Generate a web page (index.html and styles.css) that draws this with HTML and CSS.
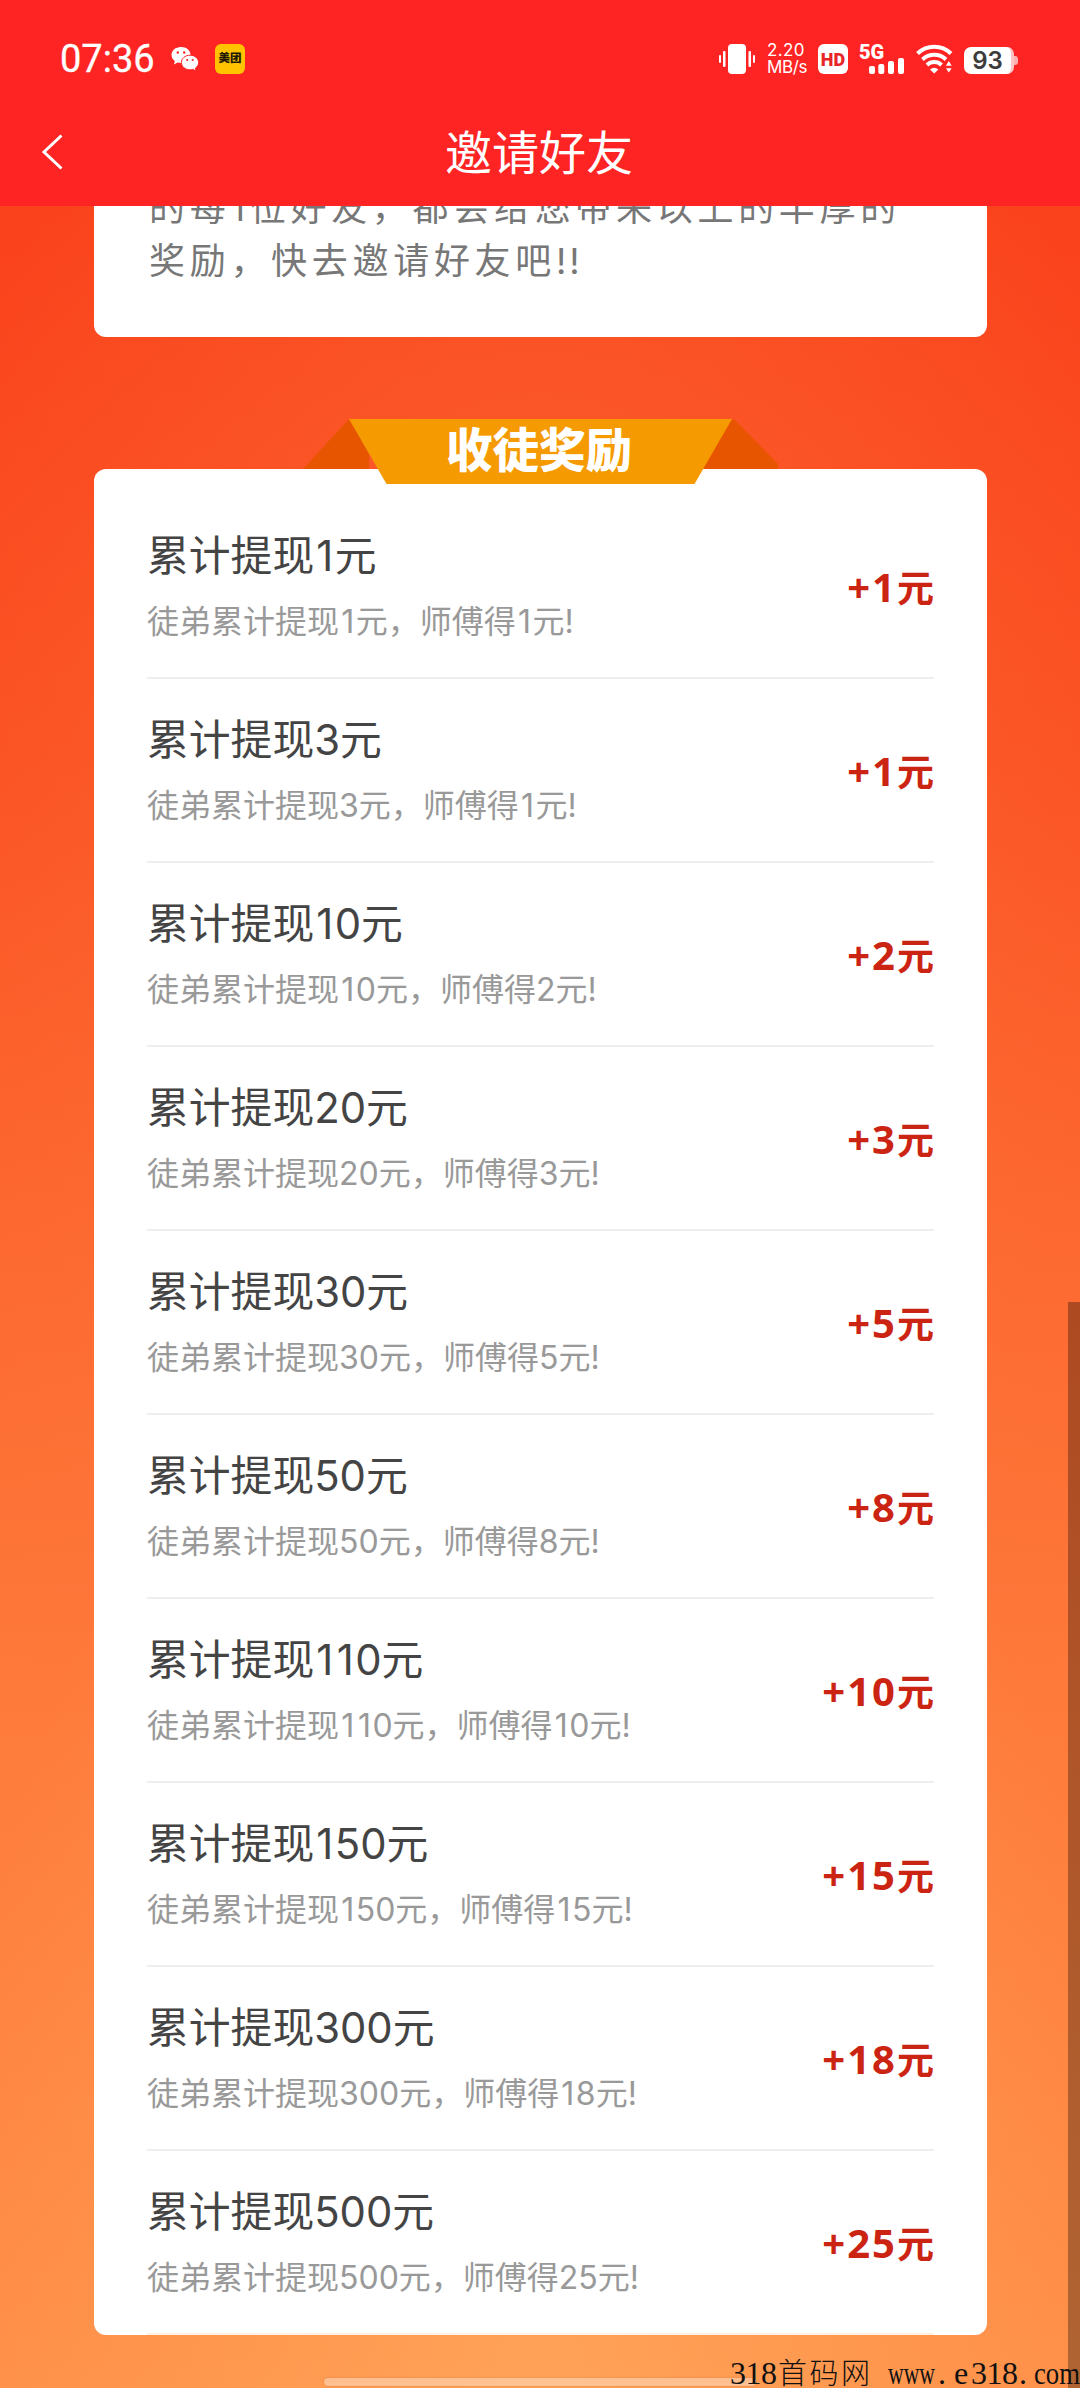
FILE: index.html
```html
<!DOCTYPE html>
<html lang="zh-CN">
<head>
<meta charset="utf-8">
<title>邀请好友</title>
<link rel="stylesheet" href="styles.css">
</head>
<body>
<div class="screen">
  <header class="header">
    <div class="status">
      <div class="status-left">
        <span class="time">07:36</span>
        <svg class="wechat" width="28" height="26" viewBox="0 0 28 26">
          <path fill="#fff" d="M10 1C4.500 1 .5 4.600.5 9c0 2.500 1.400 4.600 3.300 6.100L3 18.500l3.600-1.900c1 .3 2.200.5 3.400.5C15.500 17.100 19.500 13.500 19.500 9S15.500 1 10 1z"/>
          <path fill="#fff" stroke="#ff2424" stroke-width="1" d="M19 9.200c-4.800 0-8.600 3.300-8.600 7.300s3.800 7.300 8.600 7.300c1 0 2-.1 2.900-.4l3.200 1.700-.8-2.900c2-1.300 3.300-3.400 3.300-5.700 0-4-3.800-7.300-8.600-7.300z"/>
          <g fill="#ff2424"><circle cx="6.800" cy="6.500" r="1.200"/><circle cx="13.200" cy="6.500" r="1.200"/><circle cx="16.200" cy="14" r="1.100"/><circle cx="21.700" cy="14" r="1.100"/></g>
        </svg>
        <span class="meituan">美团</span>
      </div>
      <div class="status-right">
        <svg class="vibrate" width="36" height="30" viewBox="0 0 36 30" fill="#fff">
          <rect x="9" y="0" width="18" height="30" rx="4"/>
          <rect x="0" y="11" width="2" height="8" rx="1"/><rect x="4" y="7" width="2.500" height="16" rx="1"/>
          <rect x="29.500" y="7" width="2.500" height="16" rx="1"/><rect x="34" y="11" width="2" height="8" rx="1"/>
        </svg>
        <div class="speed"><span>2.20</span><span>MB/s</span></div>
        <span class="hd">HD</span>
        <div class="signal">
          <span class="net">5G</span>
          <svg class="bars" width="36" height="16" viewBox="0 0 36 16" fill="#fff">
            <rect x="0" y="8" width="6" height="8" rx="2"/><rect x="9.300" y="6" width="6" height="10" rx="2"/>
            <rect x="19" y="3" width="6" height="13" rx="2"/><rect x="29" y="0" width="6" height="16" rx="2"/>
          </svg>
        </div>
        <svg class="wifi" width="38" height="30" viewBox="0 0 38 30">
          <g fill="none" stroke="#fff" stroke-width="4"><path d="M1.500 9.500a24 24 0 0 1 33.500 0"/><path d="M6.500 15.500a17 17 0 0 1 23.500 0"/><path d="M11 21a10.500 10.500 0 0 1 14.500 0"/></g>
          <path fill="#fff" d="M14 25.500q4.200-3.500 8.400 0L18.200 29.500z"/>
          <path fill="#fff" stroke="#ff2424" stroke-width="1.500" d="M28.500 22.500l4.300-7 4.300 7zM28.500 23.500h8.600l-4.300 6.500z"/>
        </svg>
        <div class="battery"><span class="cell">93</span><span class="nub"></span></div>
      </div>
    </div>
    <nav class="navbar">
      <svg class="back" width="24" height="38" viewBox="0 0 24 38"><path d="M21.500 2.500L4 19l17.500 16.500" fill="none" stroke="#fff" stroke-width="3"/></svg>
      <h1 class="title">邀请好友</h1>
    </nav>
  </header>

  <main class="content">
    <section class="card intro">
      <p class="intro-text">的每<s>1</s>位好友，都会给您带来以上的丰厚的<br>奖励，快去邀请好友吧<span class="marks">!!</span></p>
    </section>

    <section class="card rewards">
      <div class="ribbon">
        <svg class="ribbon-shape" width="476" height="65" viewBox="0 0 476 65">
          <path fill="#e85500" d="M0 50L46 0h20v50zM431 0l44 45v5h-75V10z"/>
          <path fill="#f59a00" d="M46 0h383l-37.500 65h-308z"/>
        </svg>
        <h2 class="ribbon-title">收徒奖励</h2>
      </div>
      <ul class="list">
        <li class="row"><div><h3>累计提现<s>1</s>元</h3><p>徒弟累计提现<s>1</s>元，师傅得<s>1</s>元!</p></div><b>+1<i>元</i></b></li>
        <li class="row"><div><h3>累计提现3元</h3><p>徒弟累计提现3元，师傅得<s>1</s>元!</p></div><b>+1<i>元</i></b></li>
        <li class="row"><div><h3>累计提现<s>1</s>0元</h3><p>徒弟累计提现<s>1</s>0元，师傅得2元!</p></div><b>+2<i>元</i></b></li>
        <li class="row"><div><h3>累计提现20元</h3><p>徒弟累计提现20元，师傅得3元!</p></div><b>+3<i>元</i></b></li>
        <li class="row"><div><h3>累计提现30元</h3><p>徒弟累计提现30元，师傅得5元!</p></div><b>+5<i>元</i></b></li>
        <li class="row"><div><h3>累计提现50元</h3><p>徒弟累计提现50元，师傅得8元!</p></div><b>+8<i>元</i></b></li>
        <li class="row"><div><h3>累计提现<s>1</s><s>1</s>0元</h3><p>徒弟累计提现<s>1</s><s>1</s>0元，师傅得<s>1</s>0元!</p></div><b>+10<i>元</i></b></li>
        <li class="row"><div><h3>累计提现<s>1</s>50元</h3><p>徒弟累计提现<s>1</s>50元，师傅得<s>1</s>5元!</p></div><b>+15<i>元</i></b></li>
        <li class="row"><div><h3>累计提现300元</h3><p>徒弟累计提现300元，师傅得<s>1</s>8元!</p></div><b>+18<i>元</i></b></li>
        <li class="row"><div><h3>累计提现500元</h3><p>徒弟累计提现500元，师傅得25元!</p></div><b>+25<i>元</i></b></li>
      </ul>
    </section>
  </main>

  <div class="scrollbar"></div>
  <div class="home-bar"></div>
  <svg class="watermark" width="352" height="36" viewBox="0 0 352 36">
    <text x="0" y="32" textLength="47">318</text>
    <text class="han" x="48" y="32" textLength="92">首码网</text>
    <text x="158" y="32" textLength="47" lengthAdjust="spacingAndGlyphs">www</text>
    <text x="208" y="32">.</text>
    <text x="224" y="32">e</text>
    <text x="241" y="32" textLength="47">318</text>
    <text x="289" y="32">.</text>
    <text x="304" y="32" textLength="46" lengthAdjust="spacingAndGlyphs">com</text>
  </svg>
</div>
</body>
</html>
```
FILE: styles.css
```css
* { box-sizing: border-box; margin: 0; padding: 0; }
body { font-family: "Inter", "Noto Sans CJK SC", sans-serif; }
.screen {
  position: relative;
  width: 1080px;
  height: 2388px;
  overflow: hidden;
  display: flex;
  flex-direction: column;
  background:
    radial-gradient(ellipse 600px 1200px at 50% 100%, rgba(255,190,110,.42), rgba(255,170,80,0)),
    radial-gradient(ellipse 620px 1300px at 50% 40%, rgba(252,120,60,.5), rgba(252,120,60,0)),
    linear-gradient(#fa421c 206px, #fb5223 760px, #fd6a31 1290px, #fe7c3c 1750px, #ff8f48 2388px);
}
.header { flex: none; height: 206px; background: #ff2424; color: #fff; }
.status {
  height: 118px;
  padding: 0 62px 0 60px;
  display: flex;
  align-items: center;
  justify-content: space-between;
}
.status-left, .status-right { display: flex; align-items: center; }
.time { font: 400 38px/1 Roboto, sans-serif; width: 95px; -webkit-text-stroke: .3px #fff; }
.wechat { margin-left: 16px; }
.meituan {
  width: 30px; height: 30px; margin-left: 16px; border-radius: 6px;
  background: #ffc300; color: #221a00;
  font-size: 11.500px; font-weight: 900; line-height: 29px; text-align: center; white-space: nowrap;
}
.speed {
  width: 39px; margin-left: 12px; display: flex; flex-direction: column;
  font-size: 17px; line-height: 17.500px; letter-spacing: -.4px; white-space: nowrap;
}
.speed span:first-child { letter-spacing: .4px; }
.hd {
  width: 30px; height: 30px; margin-left: 12px; border-radius: 6px;
  background: #fff; color: #e8262a;
  font: 900 18px/31px Roboto, sans-serif; text-align: center;
}
.signal { width: 46px; height: 30px; margin-left: 11px; display: flex; flex-direction: column; justify-content: space-between; }
.net { font: 900 20px/16px Roboto, sans-serif; height: 14px; }
.bars { align-self: flex-end; }
.wifi { margin-left: 11px; }
.battery { margin-left: 10px; display: flex; align-items: center; }
.cell {
  width: 50px; height: 27px; margin-top: 3px; border-radius: 7px; background: #fff;
  border-right: 3px solid #ffc4c4; color: #3c3c3c;
  font-size: 24px; font-weight: 600; line-height: 27px; text-align: center;
}
.nub { width: 4px; height: 9px; margin-top: 3px; background: #ffb0b0; border-radius: 0 3px 3px 0; }
.navbar { height: 88px; padding: 0 40px; display: flex; align-items: center; }
.back { margin-top: -20px; }
.title { flex: 1; padding-right: 26px; margin-top: -19px; text-align: center; font-size: 47px; font-weight: 400; line-height: 60px; }

.content { flex: 1; padding: 0 93px 0 94px; }
.card { background: #fff; }
.intro { height: 131px; overflow: hidden; border-radius: 0 0 12px 12px; display: flex; align-items: flex-end; padding: 0 0 49px 55px; }
.intro-text { font-size: 36px; line-height: 53px; letter-spacing: 4.700px; color: #777; white-space: nowrap; }
.marks { letter-spacing: 3px; }
.rewards { position: relative; margin-top: 132px; height: 1866px; padding: 26px 53px 0; border-radius: 12px; }
.ribbon { position: absolute; left: 209px; top: -50px; width: 476px; height: 65px; }
.ribbon-shape { display: block; }
.ribbon-title { position: absolute; inset: 0 4px 0 0; text-align: center; color: #fff; font-size: 46.500px; font-weight: 900; line-height: 62px; }
.list { list-style: none; }
.row { height: 184px; display: flex; align-items: center; justify-content: space-between; border-bottom: 2px solid #eee; }
.row:last-child { border-bottom-color: #fff0e2; }
.row h3 { padding-top: 6px; font-size: 41.800px; font-weight: 400; line-height: 66px; color: #444; }
.row p { font-size: 32px; line-height: 66px; color: #999; }
/* The narrow digit gets a little air on both sides */
s { text-decoration: none; }
.row h3 s { margin: 0 1.500px 0 2px; }
.row p s { margin: 0 1.500px 0 2.200px; }
.row b { font: 700 40px/60px "Noto Sans", sans-serif; letter-spacing: 2px; color: #cb2412; }
.row i { font-family: "Noto Sans CJK SC", sans-serif; font-size: 37px; font-style: normal; letter-spacing: 0; }

.scrollbar { position: absolute; right: 0; top: 1302px; bottom: 0; width: 12px; background: rgba(0,0,0,.31); }
.home-bar { position: absolute; left: 324px; top: 2378px; width: 432px; height: 8px; border-radius: 4px; background: rgba(255,225,205,.5); box-shadow: 0 0 2px rgba(150,60,0,.3); }
.watermark { position: absolute; left: 730px; bottom: 0; overflow: visible; font: 32px "Liberation Serif", serif; fill: #111; }
.han { font-family: "Noto Sans CJK SC", sans-serif; font-size: 29px; font-weight: 300; }
```
